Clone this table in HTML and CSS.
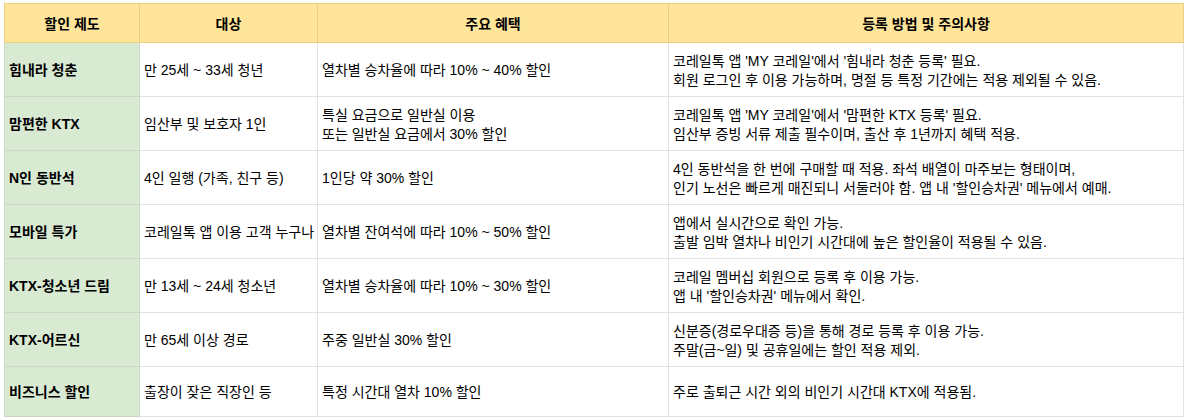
FILE: index.html
```html
<!DOCTYPE html>
<html lang="ko">
<head>
<meta charset="utf-8">
<title>KTX 할인 제도</title>
<link rel="stylesheet" href="styles.css">
</head>
<body>
<table class="sheet">
  <colgroup>
    <col class="c1"><col class="c2"><col class="c3"><col class="c4">
  </colgroup>
  <thead>
    <tr class="head">
      <th>할인 제도</th>
      <th>대상</th>
      <th>주요 혜택</th>
      <th>등록 방법 및 주의사항</th>
    </tr>
  </thead>
  <tbody>
    <tr>
      <td class="name">힘내라 청춘</td>
      <td>만 25세 ~ 33세 청년</td>
      <td>열차별 승차율에 따라 10% ~ 40% 할인</td>
      <td>코레일톡 앱 'MY 코레일'에서 '힘내라 청춘 등록' 필요.<br>회원 로그인 후 이용 가능하며, 명절 등 특정 기간에는 적용 제외될 수 있음.</td>
    </tr>
    <tr>
      <td class="name">맘편한 KTX</td>
      <td>임산부 및 보호자 1인</td>
      <td>특실 요금으로 일반실 이용<br>또는 일반실 요금에서 30% 할인</td>
      <td>코레일톡 앱 'MY 코레일'에서 '맘편한 KTX 등록' 필요.<br>임산부 증빙 서류 제출 필수이며, 출산 후 1년까지 혜택 적용.</td>
    </tr>
    <tr>
      <td class="name">N인 동반석</td>
      <td>4인 일행 (가족, 친구 등)</td>
      <td>1인당 약 30% 할인</td>
      <td>4인 동반석을 한 번에 구매할 때 적용. 좌석 배열이 마주보는 형태이며,<br>인기 노선은 빠르게 매진되니 서둘러야 함. 앱 내 '할인승차권' 메뉴에서 예매.</td>
    </tr>
    <tr>
      <td class="name">모바일 특가</td>
      <td>코레일톡 앱 이용 고객 누구나</td>
      <td>열차별 잔여석에 따라 10% ~ 50% 할인</td>
      <td>앱에서 실시간으로 확인 가능.<br>출발 임박 열차나 비인기 시간대에 높은 할인율이 적용될 수 있음.</td>
    </tr>
    <tr>
      <td class="name">KTX-청소년 드림</td>
      <td>만 13세 ~ 24세 청소년</td>
      <td>열차별 승차율에 따라 10% ~ 30% 할인</td>
      <td>코레일 멤버십 회원으로 등록 후 이용 가능.<br>앱 내 '할인승차권' 메뉴에서 확인.</td>
    </tr>
    <tr>
      <td class="name">KTX-어르신</td>
      <td>만 65세 이상 경로</td>
      <td>주중 일반실 30% 할인</td>
      <td>신분증(경로우대증 등)을 통해 경로 등록 후 이용 가능.<br>주말(금~일) 및 공휴일에는 할인 적용 제외.</td>
    </tr>
    <tr class="last">
      <td class="name">비즈니스 할인</td>
      <td>출장이 잦은 직장인 등</td>
      <td>특정 시간대 열차 10% 할인</td>
      <td>주로 출퇴근 시간 외의 비인기 시간대 KTX에 적용됨.</td>
    </tr>
  </tbody>
</table>
</body>
</html>
```

FILE: styles.css
```css
html, body {
  margin: 0;
  padding: 0;
  background: #ffffff;
}

body {
  padding: 3px 0 0 4px;
  font-family: "Liberation Sans", Arial, "Noto Sans CJK KR", sans-serif;
  font-size: 14px;
  line-height: 19px;
  color: #000000;
}

.sheet {
  border-collapse: collapse;
  table-layout: fixed;
  width: 1179px;
}

.c1 { width: 135px; }
.c2 { width: 178px; }
.c3 { width: 351px; }
.c4 { width: 515px; }

.sheet th,
.sheet td {
  padding: 2px 4px 0;
  vertical-align: middle;
  white-space: nowrap;
  overflow: hidden;
}

.head th {
  height: 36px;
  background: #ffe599;
  border: 1px solid #ecd081;
  font-weight: bold;
  text-align: center;
}

.sheet td {
  height: 51px;
  border: 1px solid #e2e2e2;
  text-align: left;
}

.sheet td.name {
  background: #d9ead3;
  border-color: #c9d9c3;
  font-weight: bold;
}

.sheet tr.last td {
  height: 47px;
}
```
